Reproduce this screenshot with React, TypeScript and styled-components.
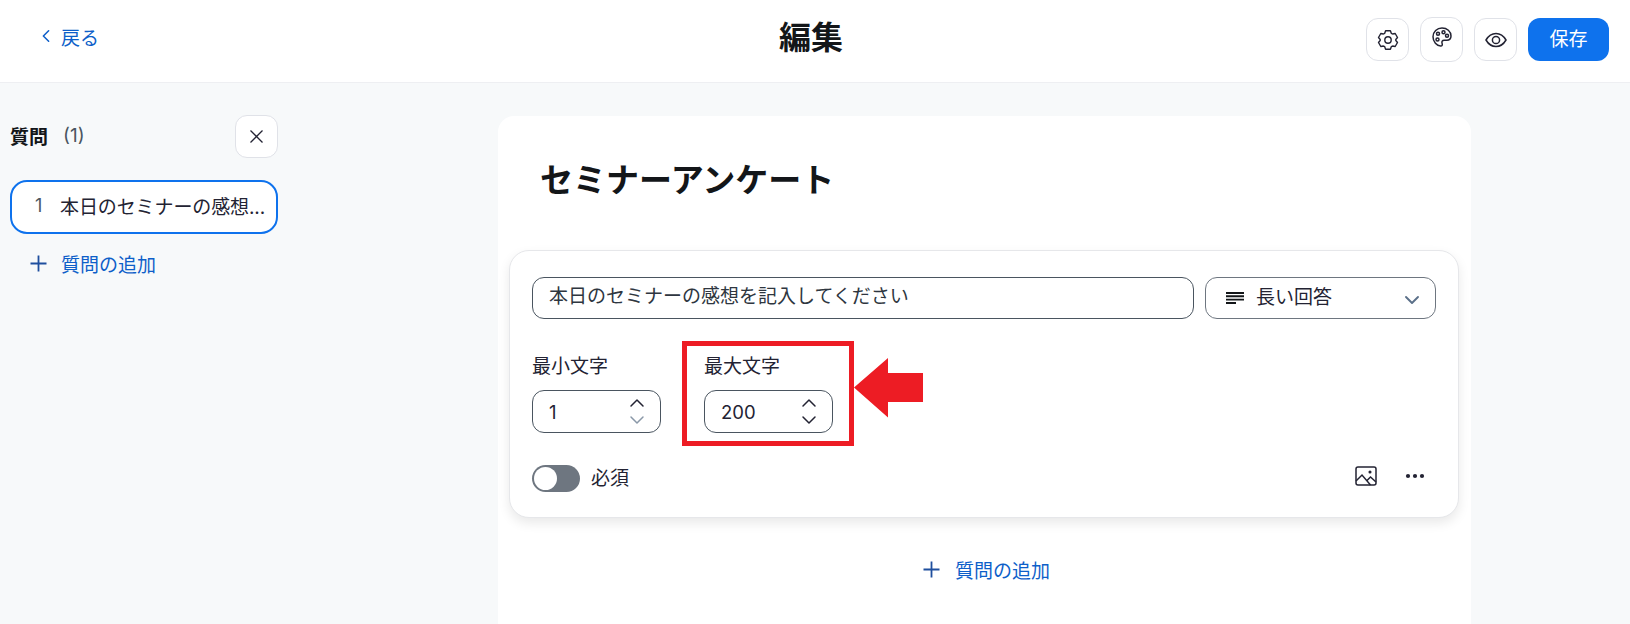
import * as React from "react";
import styled, { createGlobalStyle } from "styled-components";

const GlobalStyle = createGlobalStyle`
  html, body {
    margin: 0;
    padding: 0;
    height: 100%;
    overflow: hidden;
    background: #f7f9fa;
  }
  * { box-sizing: border-box; }
  body {
    font-family: "Inter", "Noto Sans CJK JP", sans-serif;
    color: #232333;
  }
`;

const BLUE = "#0e72ed";
const LINK = "#0e5fc9";

const Chevron = ({
  up = false,
  color = "#232333",
  size = 16,
  weight = 1.5,
}: {
  up?: boolean;
  color?: string;
  size?: number;
  weight?: number;
}) => (
  <svg width={size} height={size} viewBox="0 0 16 16" fill="none">
    <path
      d={up ? "M2 11l6-6 6 6" : "M2 5l6 6 6-6"}
      stroke={color}
      strokeWidth={weight}
      strokeLinecap="round"
      strokeLinejoin="round"
    />
  </svg>
);

const PlusIcon = () => (
  <svg width="17" height="17" viewBox="0 0 17 17" fill="none">
    <path d="M8.5 0.5v16M0.5 8.5h16" stroke="#1f4f9e" strokeWidth="1.8" />
  </svg>
);

const GearIcon = () => (
  <svg width="22" height="22" viewBox="0 0 22 22" fill="none" stroke="#232333" strokeWidth="1.4">
    <circle cx="11" cy="11" r="3.2" />
    <path
      strokeLinejoin="round"
      d="M8.6 1.8h4.8l.9 2.5 1.3.7 2.6-.5 2.3 4-1.7 2 0 1 1.7 2-2.3 4-2.6-.5-1.3.7-.9 2.5H8.6l-.9-2.5-1.3-.7-2.6.5-2.3-4 1.7-2 0-1-1.7-2 2.3-4 2.6.5 1.3-.7z"
    />
  </svg>
);

const PaletteIcon = () => (
  <svg width="20" height="20" viewBox="0 0 20 20" fill="none" stroke="#232333" strokeWidth="1.5">
    <path
      strokeLinejoin="round"
      d="M10 1C5 1 1 4.800 1 9.800c0 5 3.800 9.200 7.600 9.200 1.800 0 1.900-1.300 1.500-2.600-.6-1.800.2-3.200 2-3.200h2.600c2.400 0 4.300-1.200 4.300-4.200C19 4.300 15 1 10 1z"
    />
    <circle cx="6" cy="6.800" r="1.500" />
    <circle cx="11.500" cy="5.200" r="1.500" />
    <circle cx="15" cy="8.800" r="1.500" />
    <circle cx="5.500" cy="12.500" r="1.500" />
  </svg>
);

const EyeIcon = () => (
  <svg width="22" height="16" viewBox="0 0 22 16" fill="none" stroke="#232333" strokeWidth="1.500">
    <path d="M1 8c2.500-4.300 5.800-6.500 10-6.500S18.500 3.700 21 8c-2.500 4.300-5.800 6.500-10 6.500S3.500 12.300 1 8z" />
    <circle cx="11" cy="8" r="3.600" />
  </svg>
);

const CloseIcon = () => (
  <svg width="13" height="13" viewBox="0 0 13 13" fill="none">
    <path d="M0.500 0.500l12 12M12.500 0.500l-12 12" stroke="#232333" strokeWidth="1.300" />
  </svg>
);

const LinesIcon = () => (
  <svg width="18" height="12" viewBox="0 0 18 12">
    <path d="M0 1h18M0 4.300h18M0 7.600h18M0 11h10" stroke="#131619" strokeWidth="1.900" />
  </svg>
);

const ImageIcon = () => (
  <svg width="22" height="20" viewBox="0 0 22 20" fill="none" stroke="#232333" strokeWidth="1.500">
    <rect x="1" y="1" width="20" height="18" rx="2" />
    <path d="M1 15l6-6 8.500 10M12 14.500l3.500-3.500 5.500 5" />
    <circle cx="15" cy="6" r="0.800" fill="#232333" />
  </svg>
);

const DotsIcon = () => (
  <svg width="20" height="6" viewBox="0 0 20 6" fill="#232333">
    <circle cx="3" cy="3" r="2.100" />
    <circle cx="10" cy="3" r="2.100" />
    <circle cx="17" cy="3" r="2.100" />
  </svg>
);

const ArrowMark = () => (
  <svg width="69" height="60" viewBox="0 0 69 60">
    <path d="M0 29.500L34 0v15h35v29H34v15.500z" fill="#ed1c24" />
  </svg>
);

export default function App() {
  return (
    <>
      <GlobalStyle />
      <Page>
        <Header>
          <BackLink>
            <Chevron size={14} color={LINK} weight={1.8} />
            <span>戻る</span>
          </BackLink>
          <PageTitle>編集</PageTitle>
          <HeaderActions>
            <IconButton><GearIcon /></IconButton>
            <IconButton $tall><PaletteIcon /></IconButton>
            <IconButton><EyeIcon /></IconButton>
            <SaveButton>保存</SaveButton>
          </HeaderActions>
        </Header>
        <Body>
          <Sidebar>
            <SidebarHead>
              <SidebarTitle>
                <strong>質問</strong>
                <Count>(1)</Count>
              </SidebarTitle>
              <IconButton><CloseIcon /></IconButton>
            </SidebarHead>
            <QuestionItem>
              <ItemNumber>1</ItemNumber>
              <ItemText>本日のセミナーの感想...</ItemText>
            </QuestionItem>
            <SideAdd>
              <PlusIcon />
              <span>質問の追加</span>
            </SideAdd>
          </Sidebar>
          <Main>
            <SurveyTitle>セミナーアンケート</SurveyTitle>
            <QuestionCard>
              <TopRow>
                <TextField>本日のセミナーの感想を記入してください</TextField>
                <SelectField>
                  <LinesIcon />
                  <SelectLabel>長い回答</SelectLabel>
                  <Chevron color="#5b7089" weight={1.9} />
                </SelectField>
              </TopRow>
              <FieldRow>
                <Field>
                  <FieldLabel>最小文字</FieldLabel>
                  <NumberBox>
                    <span>1</span>
                    <Stepper>
                      <Chevron up />
                      <Chevron color="#8a98a8" />
                    </Stepper>
                  </NumberBox>
                </Field>
                <Field>
                  <FieldLabel>最大文字</FieldLabel>
                  <NumberBox>
                    <span>200</span>
                    <Stepper>
                      <Chevron up />
                      <Chevron />
                    </Stepper>
                  </NumberBox>
                  <RedFrame />
                  <ArrowSlot>
                    <ArrowMark />
                  </ArrowSlot>
                </Field>
              </FieldRow>
              <BottomRow>
                <RequiredWrap>
                  <Toggle />
                  <span>必須</span>
                </RequiredWrap>
                <CardTools>
                  <ImageIcon />
                  <DotsIcon />
                </CardTools>
              </BottomRow>
            </QuestionCard>
            <MainAdd>
              <PlusIcon />
              <span>質問の追加</span>
            </MainAdd>
          </Main>
        </Body>
      </Page>
    </>
  );
}

const Page = styled.div`
  width: 1630px;
  height: 624px;
  overflow: hidden;
  display: flex;
  flex-direction: column;
`;

const Header = styled.header`
  flex: none;
  height: 83px;
  background: #fff;
  border-bottom: 1px solid #eeeff2;
  display: grid;
  grid-template-columns: 1fr auto 1fr;
  align-items: center;
  padding: 0 21px 3px 13px;
`;

const BackLink = styled.a`
  display: flex;
  align-items: center;
  gap: 8px;
  margin: 0 0 7px 26px;
  font-size: 19px;
  color: ${LINK};

  svg {
    transform: rotate(90deg);
  }
`;

const PageTitle = styled.h1`
  margin: 0 0 9px;
  font-size: 32px;
  font-weight: 700;
  color: #131619;
`;

const HeaderActions = styled.div`
  display: flex;
  justify-content: flex-end;
  align-items: center;
  gap: 11px;
`;

const IconButton = styled.button<{ $tall?: boolean }>`
  width: 43px;
  height: ${(p) => (p.$tall ? "45px" : "43px")};
  padding: 0 0 ${(p) => (p.$tall ? "6px" : "0")};
  flex: none;
  display: flex;
  align-items: center;
  justify-content: center;
  background: #fff;
  border: 1px solid #e0e2e8;
  border-radius: 12px;
`;

const SaveButton = styled.button`
  width: 81px;
  height: 43px;
  padding: 0 0 5px;
  background: ${BLUE};
  color: #fff;
  border: none;
  border-radius: 12px;
  font-family: inherit;
  font-size: 19px;
`;

const Body = styled.div`
  flex: 1;
  min-height: 0;
  display: flex;
`;

const Sidebar = styled.aside`
  flex: none;
  width: 498px;
  padding: 32px 220px 0 10px;
`;

const SidebarHead = styled.div`
  display: flex;
  align-items: center;
  justify-content: space-between;
  height: 43px;
`;

const SidebarTitle = styled.div`
  display: flex;
  align-items: center;
  gap: 15px;
  padding-bottom: 3px;
  font-size: 19px;
  color: #131619;
`;

const Count = styled.span`
  font-size: 19px;
  color: #4a5560;
`;

const QuestionItem = styled.div`
  margin-top: 22px;
  height: 54px;
  display: flex;
  align-items: center;
  padding: 0 8px 4px 23px;
  gap: 14px;
  background: #fff;
  border: 2px solid ${BLUE};
  border-radius: 17px;
  font-size: 19px;
`;

const ItemNumber = styled.span`
  flex: none;
  width: 11px;
  font-size: 18px;
  color: #4a5560;
`;

const ItemText = styled.span`
  white-space: nowrap;
  letter-spacing: -0.1px;
`;

const SideAdd = styled.div`
  margin-top: 16px;
  padding-left: 20px;
  display: flex;
  align-items: center;
  gap: 14px;
  font-size: 19px;
  color: ${LINK};
`;

const Main = styled.main`
  flex: none;
  width: 973px;
  height: 560px;
  margin-top: 33px;
  padding: 0 11px;
  background: #fff;
  border-radius: 16px 16px 0 0;
`;

const SurveyTitle = styled.h2`
  margin: 0;
  padding: 40px 0 0 31px;
  height: 134px;
  font-size: 33px;
  line-height: 48px;
  font-weight: 700;
  color: #131619;
`;

const QuestionCard = styled.section`
  width: 950px;
  height: 268px;
  padding: 26px 22px 0;
  background: #fff;
  border: 1px solid #e6e7ea;
  border-radius: 20px;
  box-shadow: 0 5px 12px rgba(0, 0, 0, 0.09);
`;

const TopRow = styled.div`
  display: flex;
  gap: 11px;
`;

const TextField = styled.div`
  width: 662px;
  height: 42px;
  padding: 0 16px 7px;
  display: flex;
  align-items: center;
  border: 1px solid #4a5560;
  border-radius: 12px;
  font-size: 19px;
  color: #2e3640;
`;

const SelectField = styled.div`
  width: 231px;
  height: 42px;
  padding: 0 15px 0 20px;
  display: flex;
  align-items: center;
  border: 1px solid #6e7680;
  border-radius: 12px;
  font-size: 19px;

  svg:last-child {
    margin-top: 4px;
  }
`;

const SelectLabel = styled.span`
  flex: 1;
  margin: 0 0 6px 12px;
`;

const FieldRow = styled.div`
  display: flex;
  gap: 43px;
  margin-top: 27px;
`;

const Field = styled.div`
  position: relative;
  width: 129px;
`;

const FieldLabel = styled.div`
  height: 44px;
  padding-top: 7px;
  line-height: 27px;
  font-size: 19px;
`;

const NumberBox = styled.div`
  height: 43px;
  display: flex;
  align-items: center;
  justify-content: space-between;
  padding: 0 15px 0 16px;
  border: 1px solid #4a5560;
  border-radius: 12px;
  font-size: 18.5px;
`;

const Stepper = styled.div`
  display: flex;
  flex-direction: column;
  gap: 1px;
`;

const RedFrame = styled.div`
  position: absolute;
  left: -22px;
  top: -5px;
  width: 172px;
  height: 105px;
  border: 5px solid #ed1c24;
`;

const ArrowSlot = styled.div`
  position: absolute;
  left: 150px;
  top: 12px;
  line-height: 0;
`;

const BottomRow = styled.div`
  display: flex;
  align-items: center;
  justify-content: space-between;
  margin-top: 30px;
  padding-right: 11px;
`;

const RequiredWrap = styled.div`
  display: flex;
  align-items: center;
  gap: 11px;
  font-size: 19px;

  span:last-child {
    margin-bottom: 3px;
  }
`;

const Toggle = styled.span`
  position: relative;
  display: block;
  width: 48px;
  height: 27px;
  border-radius: 14px;
  background: #6e7680;

  &::after {
    content: "";
    position: absolute;
    left: 2px;
    top: 2px;
    width: 23px;
    height: 23px;
    border-radius: 50%;
    background: #fff;
  }
`;

const CardTools = styled.div`
  display: flex;
  align-items: center;
  gap: 28px;
  margin-bottom: 4px;
`;

const MainAdd = styled.div`
  margin-top: 38px;
  padding-left: 4px;
  display: flex;
  justify-content: center;
  align-items: center;
  gap: 15px;
  font-size: 19px;
  color: ${LINK};
`;
